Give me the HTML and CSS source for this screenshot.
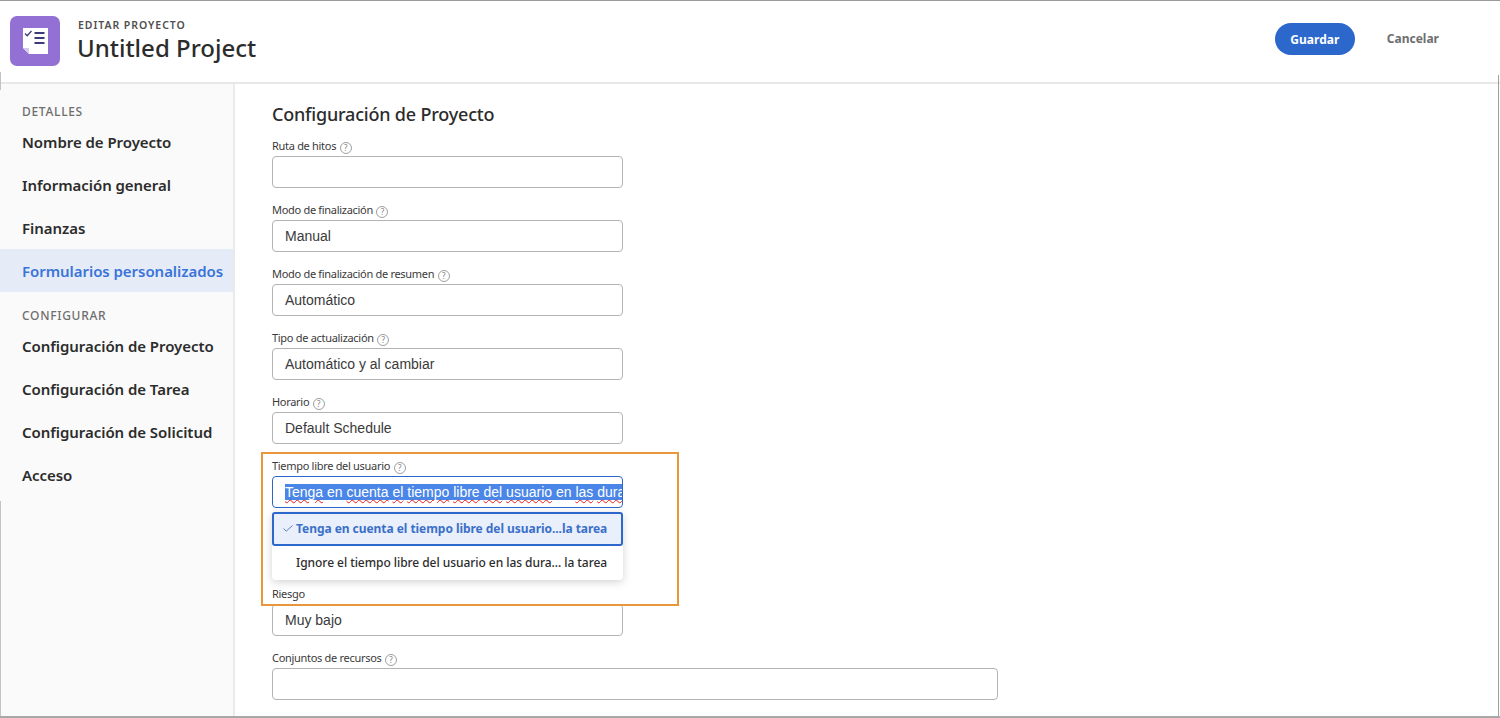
FILE: index.html
```html
<!DOCTYPE html>
<html lang="es">
<head>
    <meta charset="UTF-8">
    <title>Editar Proyecto</title>
    <link rel="stylesheet" href="styles.css">
</head>
<body>
    <header class="top-bar">
        <div class="project-icon">
            <svg width="25" height="26" viewBox="0 0 25 26">
                <path d="M0 0H25V26H6L0 20Z" fill="#fff"/>
                <path d="M0 20H6V26Z" fill="#d5c8ee"/>
                <path d="M2 5.5L4.2 7.7L8.5 3" fill="none" stroke="#3d3a7c" stroke-width="1.3"/>
                <path d="M11.5 5H21.5M11.5 10H21.5M11.5 15H21.5" stroke="#3d3a7c" stroke-width="2"/>
            </svg>
        </div>
        <div class="title-block">
            <div class="eyebrow">EDITAR PROYECTO</div>
            <div class="project-name">Untitled Project</div>
        </div>
        <div class="actions">
            <button class="btn-save">Guardar</button>
            <button class="btn-cancel">Cancelar</button>
        </div>
    </header>

    <div class="main">
        <nav class="sidebar">
            <div class="nav-heading">DETALLES</div>
            <a class="nav-item">Nombre de Proyecto</a>
            <a class="nav-item">Información general</a>
            <a class="nav-item">Finanzas</a>
            <a class="nav-item active">Formularios personalizados</a>
            <div class="nav-heading second">CONFIGURAR</div>
            <a class="nav-item">Configuración de Proyecto</a>
            <a class="nav-item">Configuración de Tarea</a>
            <a class="nav-item">Configuración de Solicitud</a>
            <a class="nav-item">Acceso</a>
        </nav>

        <section class="content">
            <h2>Configuración de Proyecto</h2>

            <div class="field">
                <label>Ruta de hitos <span class="help">?</span></label>
                <div class="input"></div>
            </div>
            <div class="field">
                <label>Modo de finalización <span class="help">?</span></label>
                <div class="input">Manual</div>
            </div>
            <div class="field">
                <label>Modo de finalización de resumen <span class="help">?</span></label>
                <div class="input">Automático</div>
            </div>
            <div class="field">
                <label>Tipo de actualización <span class="help">?</span></label>
                <div class="input">Automático y al cambiar</div>
            </div>
            <div class="field">
                <label>Horario <span class="help">?</span></label>
                <div class="input">Default Schedule</div>
            </div>
            <div class="field open">
                <label>Tiempo libre del usuario <span class="help">?</span></label>
                <div class="input focused"><span class="selected-text"><span class="typo">Tenga</span> en <span class="typo">cuenta</span> <span class="typo">el</span> <span class="typo">tiempo</span> <span class="typo">libre</span> <span class="typo">del</span> <span class="typo">usuario</span> en <span class="typo">las</span> <span class="typo">duraciones</span> de la tarea</span></div>
                <ul class="menu">
                    <li class="current">
                        <svg class="check" width="10" height="7" viewBox="0 0 10 7"><path d="M0.5 3.5L3.2 6.2L9.5 0.5" fill="none" stroke="#5f7fb8" stroke-width="1"/></svg>
                        Tenga en cuenta el tiempo libre del usuario...la tarea
                    </li>
                    <li>Ignore el tiempo libre del usuario en las dura... la tarea</li>
                </ul>
                <div class="callout"></div>
            </div>
            <div class="field">
                <label>Riesgo</label>
                <div class="input">Muy bajo</div>
            </div>
            <div class="field">
                <label>Conjuntos de recursos <span class="help">?</span></label>
                <div class="input wide"></div>
            </div>
        </section>
    </div>
</body>
</html>
```

FILE: styles.css
```css
html, body {
    height: 100%;
}
body {
    position: relative;
    margin: 0;
    height: 718px;
    overflow: hidden;
    box-sizing: border-box;
    border-top: 1px solid #9a9a9a;
    border-bottom: 2px solid #a8a8a8;
    font-family: "Noto Sans", Arial, sans-serif;
    color: #2c2c2c;
    background: #fff;
    display: flex;
    flex-direction: column;
}
/* window edges, they only show on part of the height */
body::before {
    content: "";
    position: absolute;
    top: 74px;
    bottom: 0;
    right: 1px;
    width: 1px;
    background: #a0a0a0;
}
body::after {
    content: "";
    position: absolute;
    top: 71px;
    bottom: 0;
    left: 0;
    width: 1px;
    background: linear-gradient(#c4c4c4 18px, transparent 18px, transparent 429px, #c4c4c4 429px);
}
.top-bar {
    height: 80px;
    flex: none;
    display: flex;
    align-items: center;
    border-bottom: 2px solid #e8e8e8;
    padding: 0 61px 1px 10px;
}
.project-icon {
    width: 50px;
    height: 50px;
    border-radius: 7px;
    background: #9370d4;
    display: flex;
    align-items: center;
    justify-content: center;
}
.title-block {
    margin-left: 18px;
}
.eyebrow {
    font-size: 10.5px;
    font-weight: 600;
    letter-spacing: 0.95px;
    line-height: 14px;
    color: #505050;
}
.project-name {
    font-size: 24px;
    font-weight: 500;
    line-height: 32px;
    margin-left: -1px;
}
.actions {
    margin-left: auto;
    display: flex;
    align-items: center;
    gap: 32px;
    padding-bottom: 4px;
}
.btn-save {
    width: 80px;
    height: 32px;
    border: 0;
    border-radius: 16px;
    background: #2c68cc;
    color: #fff;
    font: 700 12px "Noto Sans", Arial, sans-serif;
}
.btn-cancel {
    border: 0;
    padding: 0 0 2px;
    background: none;
    color: #6e6e6e;
    font: 700 12px "Noto Sans", Arial, sans-serif;
}
.main {
    flex: 1;
    display: flex;
    min-height: 0;
}
.sidebar {
    width: 233px;
    flex: none;
    background: #fafafa;
    border-right: 2px solid #eaeaea;
    padding-top: 20px;
}
.nav-heading {
    font-size: 12px;
    font-weight: 500;
    letter-spacing: 0.7px;
    line-height: 16px;
    color: #6e6e6e;
    padding-left: 22px;
}
.nav-heading.second {
    margin-top: 16px;
}
.nav-item {
    display: block;
    height: 43px;
    line-height: 44px;
    padding-left: 22px;
    font-size: 15px;
    font-weight: 600;
    letter-spacing: -0.05px;
    white-space: nowrap;
}
.nav-item.active {
    background: #e5ecf7;
    color: #3b74d8;
}
.content {
    flex: 1;
    padding: 17px 0 0 37px;
}
h2 {
    margin: 0 0 13px;
    font-size: 18px;
    font-weight: 500;
    line-height: 26px;
    letter-spacing: -0.2px;
}
.field {
    position: relative;
    margin-bottom: 16px;
}
.field.open {
    margin-bottom: 80px;
}
label {
    display: block;
    height: 16px;
    font-size: 11px;
    line-height: 12px;
    letter-spacing: -0.3px;
    color: #3a3a3a;
}
.help {
    display: inline-block;
    box-sizing: border-box;
    width: 12px;
    height: 12px;
    margin-left: 1px;
    border: 1px solid #a0a0a0;
    border-radius: 50%;
    font-size: 8px;
    line-height: 10px;
    letter-spacing: 0;
    text-align: center;
    color: #808080;
    vertical-align: -1px;
}
.input {
    box-sizing: border-box;
    width: 351px;
    height: 32px;
    border: 1px solid #b3b3b3;
    border-radius: 4px;
    padding: 0 0 0 12px;
    font-family: "Liberation Sans", Arial, sans-serif;
    font-size: 14px;
    line-height: 30px;
    color: #3a3a3a;
    white-space: nowrap;
    overflow: hidden;
    background: #fff;
}
.input.wide {
    width: 726px;
}
.input.focused {
    border-color: #2c68cc;
}
.selected-text {
    background: #4a86e8;
    color: #fff;
}
.typo {
    text-decoration: underline wavy #f01818 1px;
    text-underline-offset: 2px;
}
.menu {
    position: absolute;
    left: 0;
    top: 52px;
    z-index: 2;
    box-sizing: border-box;
    width: 351px;
    margin: 0;
    padding: 0;
    list-style: none;
    background: #fff;
    border-radius: 4px;
    box-shadow: 0 2px 8px rgba(0, 0, 0, 0.18);
    font-size: 12px;
    font-weight: 500;
    letter-spacing: -0.05px;
}
.menu li {
    box-sizing: border-box;
    height: 34px;
    line-height: 33px;
    padding-left: 24px;
    white-space: nowrap;
}
.menu li.current {
    position: relative;
    background: #e9f0fb;
    border: 2px solid #2c68cc;
    border-radius: 3px;
    padding-left: 22px;
    line-height: 29px;
    color: #3b6fc9;
    font-weight: 700;
}
.check {
    position: absolute;
    left: 9px;
    top: 11px;
}
.callout {
    position: absolute;
    left: -11px;
    top: -8px;
    box-sizing: border-box;
    width: 418px;
    height: 154px;
    border: 2px solid #e8973a;
    z-index: 3;
    pointer-events: none;
}
```
